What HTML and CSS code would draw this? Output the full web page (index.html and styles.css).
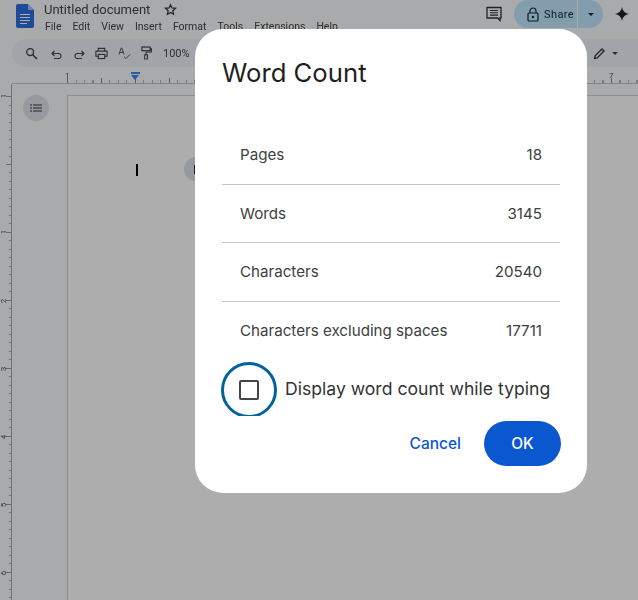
FILE: index.html
```html
<!DOCTYPE html>
<html lang="en">
<head>
    <meta charset="UTF-8">
    <title>Untitled document</title>
    <link rel="stylesheet" href="styles.css">
</head>
<body>

    <!-- Editor behind the dialog -->
    <div class="app">
        <header class="topbar">
            <svg class="doc-logo" width="18" height="24" viewBox="0 0 18 24">
                <path d="M2 0h10l6 6v16a2 2 0 0 1-2 2H2a2 2 0 0 1-2-2V2a2 2 0 0 1 2-2z" fill="#2f6de0"/>
                <path d="M12 0l6 6h-6z" fill="#a9c4f5"/>
                <path d="M4 10.5h10M4 13.500h10M4 16.500h10M4 19.500h7" stroke="#fff" stroke-width="1.200"/>
            </svg>
            <div class="doc-info">
                <div class="doc-title">
                    <span>Untitled document</span>
                    <svg class="star" width="13" height="13" viewBox="0 0 24 24"><path d="M12 3l2.700 6.100 6.600.7-5 4.400 1.400 6.500L12 17.400l-5.700 3.300 1.400-6.500-5-4.400 6.600-.7z" fill="none" stroke="#333" stroke-width="2.200"/></svg>
                </div>
                <nav class="menu">
                    <span>File</span><span>Edit</span><span>View</span><span>Insert</span><span>Format</span><span>Tools</span><span>Extensions</span><span>Help</span>
                </nav>
            </div>
            <div class="top-actions">
                <svg width="16" height="16" viewBox="0 0 16 16"><path d="M1 1.500h14v10.500h-1v2.500l-2.500-2.500H1z" fill="none" stroke="#333" stroke-width="1.300"/><path d="M4 4.500h8M4 6.800h8M4 9.100h8" stroke="#333" stroke-width="1.100"/></svg>
                <div class="share">
                    <div class="share-main">
                        <svg width="12" height="15" viewBox="0 0 12 15"><path d="M3 6V4a3 3 0 0 1 6 0v2" fill="none" stroke="#0a2a40" stroke-width="1.200"/><rect x="1" y="6" width="10" height="8" rx="1" fill="none" stroke="#0a2a40" stroke-width="1.200"/><circle cx="6" cy="10" r="1.200" fill="#0a2a40"/></svg>
                        <span>Share</span>
                    </div>
                    <div class="share-more"><i class="caret"></i></div>
                </div>
                <svg class="spark" width="16" height="16" viewBox="0 0 16 16"><path d="M8 1c.6 4 3 6.400 7 7-4 .6-6.400 3-7 7-.6-4-3-6.400-7-7 4-.6 6.400-3 7-7z" fill="#222"/></svg>
            </div>
        </header>

        <div class="toolbar">
            <svg class="search" width="13" height="13" viewBox="0 0 14 14"><circle cx="5.500" cy="5.500" r="3.700" fill="none" stroke="#444" stroke-width="1.400"/><path d="M8.300 8.300l4.500 4.500" stroke="#444" stroke-width="1.600"/></svg>
            <svg class="up" width="12" height="12" viewBox="0 0 12 12"><path d="M3.500 3L1 5.500 3.500 8M1 5.500h6.500a2.500 2.500 0 0 1 0 5H3" fill="none" stroke="#444" stroke-width="1.100"/></svg>
            <svg class="up" width="12" height="12" viewBox="0 0 12 12"><path d="M8.500 3L11 5.500 8.500 8M11 5.500H4.500a2.500 2.500 0 0 0 0 5H9" fill="none" stroke="#444" stroke-width="1.100"/></svg>
            <svg width="13" height="13" viewBox="0 0 14 14"><path d="M3.500 4V1.500h7V4M3.500 10H1V4.500h12V10h-2.500" fill="none" stroke="#444" stroke-width="1.200"/><rect x="3.500" y="8" width="7" height="4.500" fill="none" stroke="#444" stroke-width="1.200"/></svg>
            <svg width="13" height="13" viewBox="0 0 14 14"><path d="M1 8l2.500-7h.6L6.500 8M2 5.800h3.500M6.500 10.500l2 2 4.500-4.500" fill="none" stroke="#444" stroke-width="1"/></svg>
            <svg width="11" height="14" viewBox="0 0 12 15"><rect x="1" y="1" width="9" height="4" fill="none" stroke="#444" stroke-width="1.300"/><path d="M10 3h1.500v3.500H5.500v3" fill="none" stroke="#444" stroke-width="1.100"/><rect x="4" y="9.500" width="3" height="4.500" fill="none" stroke="#444" stroke-width="1.100"/></svg>
            <span class="zoom-level">100%</span>
            <div class="toolbar-right">
                <svg width="13" height="13" viewBox="0 0 13 13"><path d="M1.500 11.500l.6-2.700L9 2l2 2-6.800 6.900z" fill="none" stroke="#333" stroke-width="1.300"/></svg>
                <i class="caret dark"></i>
            </div>
        </div>

        <div class="h-ruler">
            <div class="h-ticks">
                <span>1</span><span></span><span></span><span></span><span></span><span></span><span></span><span></span><span>7</span>
            </div>
            <div class="tab-marker"></div>
        </div>

        <div class="workspace">
            <div class="v-ruler">
                <span>1</span><span></span><span>1</span><span>2</span><span>3</span><span>4</span><span>5</span><span>6</span>
            </div>
            <aside class="outline-col">
                <div class="outline-btn">
                    <svg width="12" height="8" viewBox="0 0 12 8"><path d="M0 1h2M3 1h9M0 4h2M3 4h9M0 7h2M3 7h9" stroke="#333" stroke-width="1.200"/></svg>
                </div>
            </aside>
            <main class="page">
                <div class="caret-line"></div>
                <div class="float-btn"><i></i></div>
            </main>
        </div>
    </div>

    <div class="scrim"></div>

    <!-- Word count dialog -->
    <div class="dialog">
        <h2>Word Count</h2>
        <div class="stats">
            <div class="stat"><span>Pages</span><span>18</span></div>
            <div class="stat"><span>Words</span><span>3145</span></div>
            <div class="stat"><span>Characters</span><span>20540</span></div>
            <div class="stat"><span>Characters excluding spaces</span><span>17711</span></div>
        </div>
        <div class="check-row">
            <div class="focus-clip"><div class="focus-ring"><div class="box"></div></div></div>
            <span>Display word count while typing</span>
        </div>
        <div class="actions">
            <button class="btn-text">Cancel</button>
            <button class="btn-ok">OK</button>
        </div>
    </div>

</body>
</html>
```

FILE: styles.css
```css
* {
    margin: 0;
    padding: 0;
    box-sizing: border-box;
}

body {
    font-family: Roboto, "Liberation Sans", sans-serif;
    background-color: #ffffff;
    position: relative;
    width: 638px;
    height: 600px;
    overflow: hidden;
}

.app {
    width: 638px;
    height: 600px;
    background-color: #f9fbfd;
    color: #1f1f1f;
    overflow: hidden;
    filter: blur(0.4px);
}

/* Top bar */
.topbar {
    display: flex;
    height: 39px;
    padding-left: 16px;
}

.doc-logo {
    margin-top: 4px;
    flex: none;
}

.doc-info {
    margin-left: 10px;
    flex: 1;
}

.doc-title {
    display: flex;
    align-items: center;
    gap: 14px;
    font-size: 13px;
    height: 18px;
    color: #444;
}

.star {
    margin-top: 1px;
}

.menu {
    display: flex;
    gap: 11px;
    font-size: 10.500px;
    line-height: 16px;
    margin-top: 1px;
    padding-left: 1px;
    color: #444;
    white-space: nowrap;
}

.top-actions {
    display: flex;
    align-items: center;
    height: 28px;
    flex: none;
    margin-left: auto;
}

.share {
    display: flex;
    width: 89px;
    height: 28px;
    margin-left: 12px;
    border-radius: 14px;
    background-color: #c2e7ff;
    color: #0a2a40;
    font-size: 11px;
    letter-spacing: 0.4px;
}

.share-main {
    display: flex;
    align-items: center;
    gap: 5px;
    width: 64px;
    padding-left: 13px;
    border-right: 1px solid #f9fbfd;
}

.share-more {
    display: flex;
    align-items: center;
    justify-content: center;
    flex: 1;
}

.caret {
    display: block;
    width: 0;
    height: 0;
    border-left: 3.500px solid transparent;
    border-right: 3.500px solid transparent;
    border-top: 3.500px solid #0a2a40;
}

.caret.dark {
    border-top-color: #444;
}

.spark {
    margin: 0 8px 0 11px;
}

/* Toolbar */
.toolbar {
    display: flex;
    align-items: center;
    gap: 10px;
    height: 28px;
    margin-left: 12px;
    padding-left: 13px;
    border-radius: 14px 0 0 14px;
    background-color: #edf2fa;
}

.toolbar .search {
    margin-right: 3px;
}

.toolbar .up {
    margin-top: 1px;
}

.zoom-level {
    font-size: 11px;
    color: #444;
    margin-left: 1px;
}

.toolbar-right {
    display: flex;
    align-items: center;
    gap: 6px;
    margin-left: auto;
    margin-right: 20px;
}

/* Rulers */
.h-ruler {
    position: relative;
    height: 17px;
    margin-left: 12px;
    border-bottom: 1px solid #c8c8c8;
}

.h-ticks {
    display: flex;
    height: 16px;
    margin-left: 55px;
    padding-top: 5px;
    font-size: 8px;
    line-height: 8px;
    color: #555;
    background-image:
        repeating-linear-gradient(90deg, #888 0 1px, transparent 1px 34px),
        repeating-linear-gradient(90deg, #b5b5b5 0 1px, transparent 1px 8.500px);
    background-repeat: no-repeat;
    background-size: 100% 5px, 100% 3px;
    background-position: left bottom;
}

.h-ticks span {
    flex: none;
    width: 68px;
    margin-left: -2px;
    margin-right: 2px;
}

/* Blue indent marker: bar above a triangle */
.tab-marker {
    position: absolute;
    left: 119px;
    top: 5px;
    width: 9px;
    height: 8px;
    border-top: 2px solid #4285f4;
}

.tab-marker::after {
    content: "";
    display: block;
    width: 0;
    height: 0;
    margin-top: 1px;
    border-left: 4.500px solid transparent;
    border-right: 4.500px solid transparent;
    border-top: 5px solid #4285f4;
}

.workspace {
    display: flex;
    height: 516px;
}

.v-ruler {
    flex: none;
    width: 12px;
    padding-top: 10px;
    border-right: 1px solid #a8a8a8;
    font-size: 8px;
    color: #555;
    background-image:
        repeating-linear-gradient(180deg, #999 0 1px, transparent 1px 68px),
        repeating-linear-gradient(180deg, #aaa 0 1px, transparent 1px 8.500px);
    background-repeat: no-repeat;
    background-size: 5px 100%, 2px 100%;
    background-position: right 12px;
}

.v-ruler span {
    display: block;
    height: 68.200px;
    line-height: 8px;
    width: 10px;
    writing-mode: vertical-rl;
    transform: rotate(180deg);
    text-align: end;
}

.outline-col {
    flex: none;
    width: 55px;
    padding: 11px 0 0 11px;
}

.outline-btn {
    display: flex;
    align-items: center;
    justify-content: center;
    width: 26px;
    height: 26px;
    border-radius: 50%;
    background-color: #dde3ea;
}

.page {
    position: relative;
    flex: 1;
    margin-top: 11px;
    background-color: #fff;
    border-top: 1px solid #d0d0d0;
    border-left: 1px solid #d0d0d0;
}

.caret-line {
    position: absolute;
    left: 68px;
    top: 68px;
    width: 1.500px;
    height: 12px;
    background-color: #000;
}

.float-btn {
    position: absolute;
    left: 116px;
    top: 61px;
    width: 24px;
    height: 24px;
    border-radius: 50%;
    background-color: #dde3ea;
}

.float-btn i {
    display: block;
    width: 2px;
    height: 9px;
    margin: 8px 0 0 10px;
    background-color: #333;
}

/* Dialog */
.scrim {
    position: absolute;
    top: 0;
    left: 0;
    width: 100%;
    height: 100%;
    background-color: rgba(0, 0, 0, 0.32);
}

.dialog {
    position: absolute;
    left: 195px;
    top: 29px;
    width: 392px;
    height: 464px;
    padding: 24px 27px 0;
    border-radius: 28px;
    background-color: #ffffff;
    font-family: Inter, Roboto, sans-serif;
}

.dialog h2 {
    font-size: 25.700px;
    font-weight: 400;
    line-height: 40px;
    color: #1f1f1f;
    margin-bottom: 33px;
}

.stat {
    display: flex;
    align-items: center;
    justify-content: space-between;
    height: 58.500px;
    padding: 0 18px;
    border-bottom: 1px solid #c4c7c5;
    font-size: 15.150px;
    color: #3c3f41;
}

.stat:last-child {
    border-bottom: none;
}

.check-row {
    display: flex;
    align-items: flex-start;
    gap: 8px;
    height: 59px;
    margin-left: -1px;
    margin-top: 2px;
    font-size: 17.600px;
    color: #333;
}

.check-row span {
    line-height: 54px;
}

.focus-clip {
    width: 56px;
    height: 54px;
    overflow: hidden;
}

.focus-ring {
    display: flex;
    align-items: center;
    justify-content: center;
    width: 56px;
    height: 56px;
    border: 3.500px solid #00639b;
    border-radius: 50%;
}

.box {
    width: 20px;
    height: 20px;
    margin-top: -1px;
    border: 2px solid #444746;
    border-radius: 2px;
}

.actions {
    display: flex;
    align-items: center;
    justify-content: flex-end;
    gap: 23px;
    margin-right: -1px;
}

.actions button {
    border: none;
    background: none;
    font-family: inherit;
    font-size: 15.500px;
    font-weight: 500;
    cursor: pointer;
}

.btn-text {
    color: #0b57d0;
}

.actions .btn-ok {
    width: 77px;
    height: 45px;
    border-radius: 23px;
    background-color: #0b57d0;
    color: #ffffff;
}
```
